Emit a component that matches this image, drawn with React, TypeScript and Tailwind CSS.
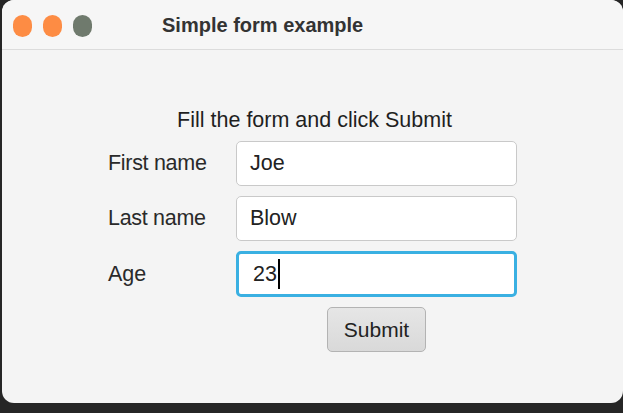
import React from "react";

export default function App() {
  const font = { fontFamily: '"Liberation Sans", Arial, sans-serif' };
  return (
    <div className="w-[623px] h-[413px] bg-[#262626] overflow-hidden pl-[2px]" style={font}>
      <div className="w-[621px] h-[403px] bg-[#f4f4f4] rounded-[12px] flex flex-col overflow-hidden">
        <div className="h-[50px] shrink-0 bg-[#f6f6f6] border-b border-[#dcdcdc] flex items-center pl-[11px]">
          <div className="flex gap-[11px] items-center mt-[2px]">
            <div className="w-[19px] h-[22px] rounded-full bg-[#fd8c44]" />
            <div className="w-[19px] h-[22px] rounded-full bg-[#fd8c44]" />
            <div className="w-[19px] h-[22px] rounded-full bg-[#6f7a6d]" />
          </div>
          <div className="ml-[70px] text-[20px] font-bold text-[#333] mt-[1px]">Simple form example</div>
        </div>
        <div className="flex flex-col pt-[56px]">
          <div className="text-center text-[21.5px] text-[#1f1f1f] leading-[28px] pl-[4px]">Fill the form and click Submit</div>
          <div className="grid grid-cols-[128px_281px] gap-y-[10px] pl-[106px] mt-[7px] items-center">
            <div className="text-[21.5px] text-[#2a2a2a] tracking-[-0.3px]">First name</div>
            <div className="h-[45px] rounded-[5px] border border-[#c9c9c9] bg-white flex items-center pl-[13px] text-[21.5px] text-[#222]">Joe</div>
            <div className="text-[21.5px] text-[#2a2a2a] tracking-[-0.3px]">Last name</div>
            <div className="h-[45px] rounded-[5px] border border-[#c9c9c9] bg-white flex items-center pl-[13px] text-[21.5px] text-[#222]">Blow</div>
            <div className="text-[21.5px] text-[#2a2a2a]">Age</div>
            <div className="h-[46px] rounded-[5px] border-[3px] border-[#3ab0e2] bg-white flex items-center pl-[14px] text-[21.5px] text-[#222]">
              23<span className="inline-block w-[2px] h-[30px] bg-black ml-[1px]" />
            </div>
          </div>
          <div className="flex pl-[325px] mt-[10px]">
            <button className="w-[99px] h-[45px] rounded-[5px] border border-[#b3b3b3] bg-gradient-to-b from-[#e6e6e6] to-[#d9d9d9] text-[21px] text-[#222]">Submit</button>
          </div>
        </div>
      </div>
    </div>
  );
}
